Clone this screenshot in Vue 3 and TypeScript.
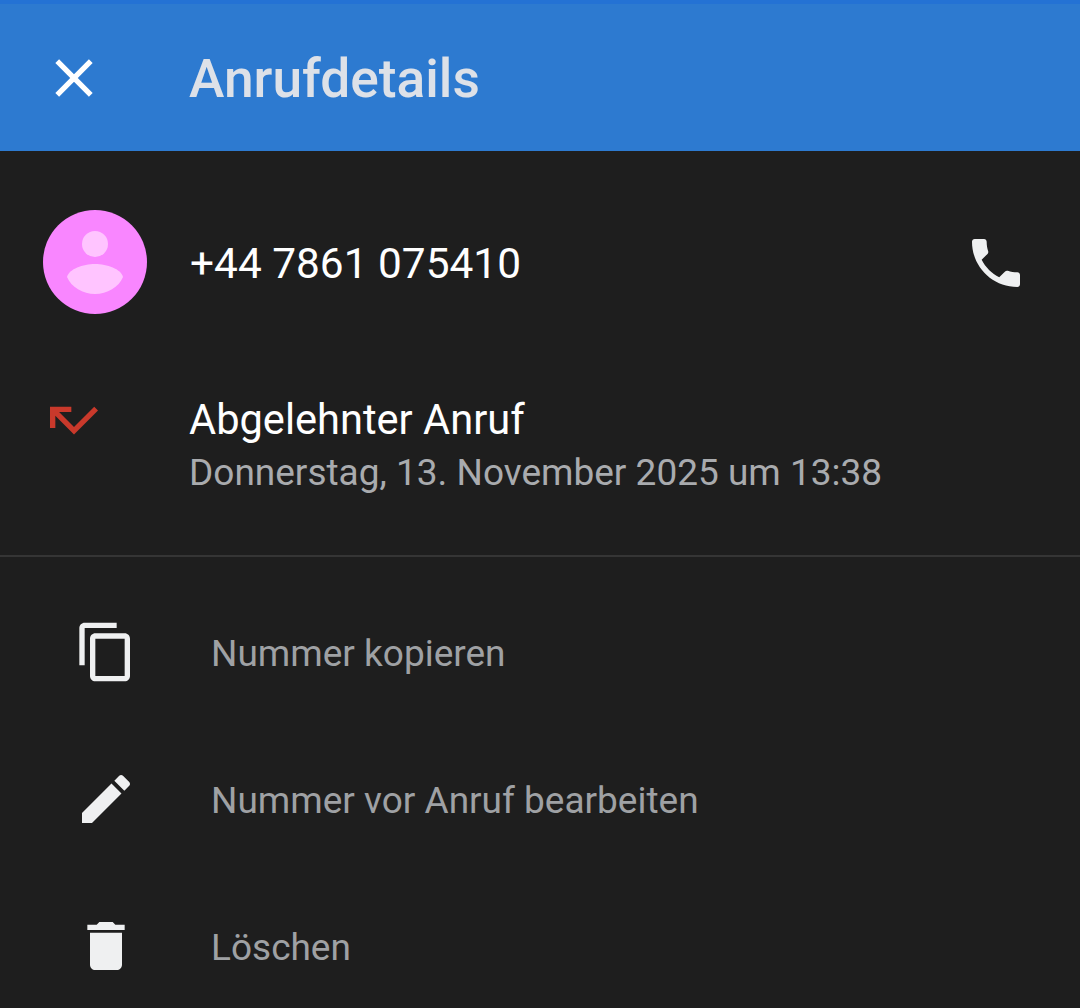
<script setup lang="ts">
interface Action {
  label: string
  d: string
}

const actions: Action[] = [
  {
    label: 'Nummer kopieren',
    d: 'M16 1H4c-1.1 0-2 .9-2 2v14h2V3h12V1zm3 4H8c-1.1 0-2 .9-2 2v14c0 1.1.9 2 2 2h11c1.1 0 2-.9 2-2V7c0-1.1-.9-2-2-2zm0 16H8V7h11v14z',
  },
  {
    label: 'Nummer vor Anruf bearbeiten',
    d: 'M3 17.25V21h3.75L17.81 9.94l-3.75-3.75L3 17.25zM20.71 7.04c.39-.39.39-1.02 0-1.41l-2.34-2.34c-.39-.39-1.02-.39-1.41 0l-1.83 1.83 3.75 3.75 1.83-1.83z',
  },
  {
    label: 'Löschen',
    d: 'M6 19c0 1.1.9 2 2 2h8c1.1 0 2-.9 2-2V7H6v12zM19 4h-3.5l-1-1h-5l-1 1H5v2h14V4z',
  },
]
</script>

<template>
  <div class="screen">
    <header class="appbar">
      <svg class="icon close" viewBox="0 0 24 24">
        <path d="M19 6.41L17.59 5 12 10.59 6.41 5 5 6.41 10.59 12 5 17.59 6.41 19 12 13.41 17.59 19 19 17.59 13.41 12z" />
      </svg>
      <h1 class="title">Anrufdetails</h1>
    </header>

    <section class="contact">
      <svg class="avatar" viewBox="0 0 104 104">
        <circle cx="52" cy="52" r="52" fill="#f986ff" />
        <circle cx="52" cy="34" r="13" fill="#ffc4ff" />
        <path d="M24 67C26 59 40 54 52 54C64 54 78 59 80 67C76 77 64 84 52 84C40 84 28 77 24 67Z" fill="#ffc4ff" />
      </svg>
      <span class="number">+44 7861 075410</span>
      <svg class="icon phone" viewBox="0 0 24 24">
        <path d="M6.62 10.79c1.44 2.83 3.76 5.14 6.59 6.59l2.2-2.2c.27-.27.67-.36 1.02-.24 1.12.37 2.33.57 3.57.57.55 0 1 .45 1 1V20c0 .55-.45 1-1 1-9.39 0-17-7.61-17-17 0-.55.45-1 1-1h3.5c.55 0 1 .45 1 1 0 1.25.2 2.45.57 3.57.11.35.03.74-.25 1.02l-2.2 2.2z" />
      </svg>
    </section>

    <section class="call">
      <svg class="icon missed" viewBox="0 0 24 24">
        <path d="M19.59 7L12 14.59 6.41 9H11V7H3v8h2v-4.59l7 7 9-9z" />
      </svg>
      <div class="call-text">
        <div class="call-type">Abgelehnter Anruf</div>
        <div class="call-date">Donnerstag, 13. November 2025 um 13:38</div>
      </div>
    </section>

    <ul class="actions">
      <li v-for="action in actions" :key="action.label" class="action">
        <svg class="icon action-icon" viewBox="0 0 24 24">
          <path :d="action.d" />
        </svg>
        <span class="action-label">{{ action.label }}</span>
      </li>
    </ul>
  </div>
</template>

<style>
html,
body {
  margin: 0;
  background: #1e1e1e;
}
</style>

<style scoped>
.screen {
  width: 1080px;
  height: 1008px;
  overflow: hidden;
  background: #1e1e1e;
  font-family: Roboto, "Liberation Sans", sans-serif;
}

.icon {
  display: block;
  flex: none;
  width: 64px;
  height: 64px;
  fill: #eff0f1;
}

.appbar {
  box-sizing: border-box;
  height: 151px;
  display: flex;
  align-items: center;
  gap: 84px;
  padding-left: 42px;
  background: #2d7ad0;
  border-top: 4px solid #2472d4;
}

.close {
  fill: #fff;
}

.title {
  margin: 0 0 0 -1px;
  padding-top: 4px;
  font-size: 53.3px;
  font-weight: 500;
  line-height: 1;
  color: #dde1e8;
}

.contact {
  display: flex;
  align-items: center;
  height: 104px;
  margin-top: 59px;
  padding: 0 43px;
}

.avatar {
  display: block;
  flex: none;
  width: 104px;
  height: 104px;
}

.number {
  margin-left: 43px;
  padding-top: 3px;
  font-size: 42.4px;
  color: #fff;
}

.phone {
  margin-left: auto;
  margin-right: 9px;
  margin-top: 1px;
}

.call {
  display: flex;
  align-items: flex-start;
  gap: 84px;
  height: 169px;
  margin-top: 74px;
  padding-left: 42px;
  border-bottom: 2px solid #353535;
  box-sizing: border-box;
}

.missed {
  fill: #c9392b;
}

.call-text {
  margin-left: -1px;
  padding-top: 5px;
}

.call-type {
  font-size: 41.6px;
  line-height: 54px;
  color: #fff;
}

.call-date {
  font-size: 37px;
  line-height: 52px;
  color: #a9abae;
}

.actions {
  margin: 21px 0 0;
  padding: 0 0 0 74px;
  list-style: none;
}

.action {
  display: flex;
  align-items: center;
  gap: 74px;
  height: 147px;
}

.action-label {
  margin-left: -1px;
  padding-top: 4px;
  font-size: 37px;
  color: #9fa1a4;
}
</style>
